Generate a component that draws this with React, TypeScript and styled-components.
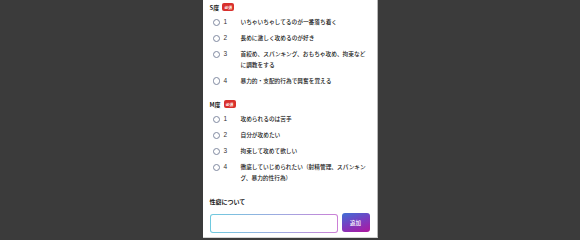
import styled, { createGlobalStyle } from 'styled-components';

const GlobalStyle = createGlobalStyle`
  html, body {
    margin: 0;
    padding: 0;
    background: #3b3b3b;
  }
  body {
    font-family: "Noto Sans CJK JP", "Noto Sans", sans-serif;
    color: #222;
  }
`;

interface Option {
  no: number;
  text: string;
}

const sOptions: Option[] = [
  { no: 1, text: 'いちゃいちゃしてるのが一番落ち着く' },
  { no: 2, text: '長めに激しく攻めるのが好き' },
  { no: 3, text: '首絞め、スパンキング、おもちゃ攻め、拘束などに調教をする' },
  { no: 4, text: '暴力的・支配的行為で興奮を覚える' },
];

const mOptions: Option[] = [
  { no: 1, text: '攻められるのは苦手' },
  { no: 2, text: '自分が攻めたい' },
  { no: 3, text: '拘束して攻めて欲しい' },
  { no: 4, text: '徹底していじめられたい（射精管理、スパンキング、暴力的性行為）' },
];

const QuestionBlock = ({ title, options }: { title: string; options: Option[] }) => (
  <Section>
    <Heading>
      {title}
      <Badge>必須</Badge>
    </Heading>
    <OptionList>
      {options.map((o) => (
        <OptionRow key={o.no}>
          <Radio />
          <Num>{o.no}</Num>
          <OptionText>{o.text}</OptionText>
        </OptionRow>
      ))}
    </OptionList>
  </Section>
);

const App = () => {
  return (
    <>
      <GlobalStyle />
      <Page>
        <Panel>
          <QuestionBlock title="S度" options={sOptions} />
          <QuestionBlock title="M度" options={mOptions} />
          <Section>
            <Heading>性癖について</Heading>
            <InputRow>
              <TextInput />
              <AddButton>追加</AddButton>
            </InputRow>
          </Section>
        </Panel>
      </Page>
    </>
  );
};

const Page = styled.div`
  display: flex;
  justify-content: center;
  height: 239px;
  overflow: hidden;
`;

const Panel = styled.div`
  width: 175px;
  box-sizing: border-box;
  height: 238px;
  background: #fff;
  padding: 2px 7px 0 7px;
  display: flex;
  flex-direction: column;
  gap: 13px;
  border-right: 1px solid #b8b8b8;
  border-bottom: 1px solid #d4d4d4;
`;

const Section = styled.div`
  display: flex;
  flex-direction: column;
  gap: 5px;
`;

const Heading = styled.div`
  display: flex;
  align-items: center;
  gap: 3px;
  height: 10px;
  font-size: 6px;
  font-weight: 700;
  color: #222;
`;

const Badge = styled.span`
  display: inline-flex;
  align-items: center;
  justify-content: center;
  width: 12px;
  height: 8px;
  border-radius: 2px;
  background: #d8302c;
  color: #fff;
  font-size: 3.8px;
  font-weight: 700;
`;

const OptionList = styled.div`
  display: flex;
  flex-direction: column;
  gap: 5.5px;
  padding-left: 3px;
`;

const OptionRow = styled.div`
  display: grid;
  grid-template-columns: 7px 17px 1fr;
  column-gap: 4px;
  align-items: start;
  font-size: 5.7px;
  line-height: 10.5px;
  font-weight: 500;
`;

const Radio = styled.span`
  box-sizing: border-box;
  width: 7.5px;
  height: 7.5px;
  margin-top: 1.5px;
  border: 0.8px solid #7f89a0;
  border-radius: 50%;
`;

const Num = styled.span`
  color: #333;
  font-size: 6.5px;
  font-family: "Liberation Sans", sans-serif;
`;

const OptionText = styled.span`
  margin-left: -4px;
  color: #222;
`;

const InputRow = styled.div`
  display: flex;
  gap: 4px;
  margin-top: 3px;
`;

const TextInput = styled.input`
  flex: 1;
  min-width: 0;
  height: 19px;
  box-sizing: border-box;
  border: 1px solid transparent;
  border-radius: 3px;
  background:
    linear-gradient(#fff, #fff) padding-box,
    linear-gradient(90deg, #6fcadf, #a3a6e0 60%, #cc7fd6) border-box;
  outline: none;
`;

const AddButton = styled.button`
  width: 28px;
  height: 19px;
  margin-top: -1px;
  border: none;
  border-radius: 3px;
  background: linear-gradient(160deg, #3f6fd6 0%, #7a3cc0 50%, #b0169e 100%);
  color: #fff;
  font-family: "Noto Sans CJK JP", sans-serif;
  font-size: 5.5px;
  font-weight: 500;
  padding: 0;
`;

export default App;
